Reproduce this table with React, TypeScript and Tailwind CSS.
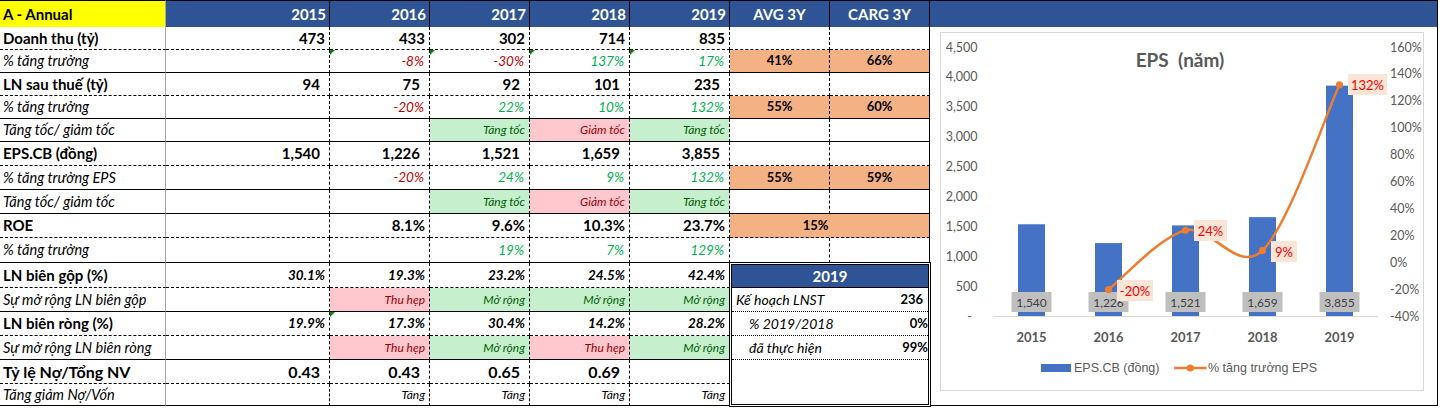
import React from 'react';

type Kind = 'num' | 'num9' | 'big' | 'neg' | 'pos' | 'up' | 'down' | 'bi' | 'orange' | 'orangeWide' | 'plain';

interface Cell {
  v?: string;
  k?: Kind;
  tri?: boolean;
  span?: number;
}

interface Row {
  label: string;
  lk: 'main' | 'sub' | 'big';
  solid: boolean;
  cells: Cell[];
}

// full class strings per cell kind
const kindClass: Record<Kind, string> = {
  num: 'justify-end pr-[4px] text-[15px] font-bold text-black',
  num9: 'justify-end pr-[9px] text-[15px] font-bold text-black',
  big: 'justify-end pr-[9px] text-[16px] font-bold text-black',
  neg: 'justify-end pr-[5px] text-[13.5px] italic text-[#C00000]',
  pos: 'justify-end pr-[5px] text-[13.5px] italic text-[#00B050]',
  up: 'justify-end pr-[4px] text-[12px] italic text-[#006100] bg-[#C6EFCE]',
  down: 'justify-end pr-[4px] text-[12px] italic text-[#9C0006] bg-[#FFC7CE]',
  bi: 'justify-end pr-[4px] text-[13.5px] font-bold italic text-black',
  orange: 'justify-center text-[13px] font-bold text-black bg-[#F4B183]',
  orangeWide: 'justify-center pr-[28px] text-[13px] font-bold text-black bg-[#F4B183]',
  plain: 'justify-end pr-[4px] text-[12px] italic text-black',
};

const labelClass = {
  main: 'pl-[3px] text-[15px] font-bold',
  sub: 'pl-[3px] text-[14.5px] italic',
  big: 'pl-[3px] text-[16px] font-bold',
};

const e: Cell = {};
const n = (v: string): Cell => ({ v, k: 'num' });
const n9 = (v: string): Cell => ({ v, k: 'num9' });
const big = (v: string): Cell => ({ v, k: 'big' });
const neg = (v: string, tri = false): Cell => ({ v, k: 'neg', tri });
const pos = (v: string, tri = false): Cell => ({ v, k: 'pos', tri });
const up = (v: string): Cell => ({ v, k: 'up' });
const down = (v: string): Cell => ({ v, k: 'down' });
const bi = (v: string, tri = false): Cell => ({ v, k: 'bi', tri });
const o = (v: string): Cell => ({ v, k: 'orange' });
const plain = (v: string): Cell => ({ v, k: 'plain' });

const rows: Row[] = [
  { label: 'Doanh thu (tỷ)', lk: 'main', solid: false, cells: [n('473'), n('433'), n('302'), n('714'), n('835'), e, e] },
  { label: '% tăng trưởng', lk: 'sub', solid: true, cells: [e, neg('-8%', true), neg('-30%', true), pos('137%', true), pos('17%', true), o('41%'), o('66%')] },
  { label: 'LN sau thuế (tỷ)', lk: 'main', solid: false, cells: [n9('94'), n9('75'), n9('92'), n9('101'), n9('235'), e, e] },
  { label: '% tăng trưởng', lk: 'sub', solid: true, cells: [e, neg('-20%'), pos('22%'), pos('10%'), pos('132%'), o('55%'), o('60%')] },
  { label: 'Tăng tốc/ giảm tốc', lk: 'sub', solid: true, cells: [e, e, up('Tăng tốc'), down('Giảm tốc'), up('Tăng tốc'), e, e] },
  { label: 'EPS.CB (đồng)', lk: 'main', solid: false, cells: [n9('1,540'), n9('1,226'), n9('1,521'), n9('1,659'), n9('3,855'), e, e] },
  { label: '% tăng trưởng EPS', lk: 'sub', solid: true, cells: [e, neg('-20%'), pos('24%'), pos('9%'), pos('132%'), o('55%'), o('59%')] },
  { label: 'Tăng tốc/ giảm tốc', lk: 'sub', solid: true, cells: [e, e, up('Tăng tốc'), down('Giảm tốc'), up('Tăng tốc'), e, e] },
  { label: 'ROE', lk: 'main', solid: false, cells: [e, n('8.1%'), n('9.6%'), n('10.3%'), n('23.7%'), { v: '15%', k: 'orangeWide', span: 2 }] },
  { label: '% tăng trưởng', lk: 'sub', solid: true, cells: [e, e, pos('19%'), pos('7%'), pos('129%'), e, e] },
  { label: 'LN biên gộp (%)', lk: 'main', solid: false, cells: [bi('30.1%'), bi('19.3%'), bi('23.2%'), bi('24.5%'), bi('42.4%')] },
  { label: 'Sự mở rộng LN biên gộp', lk: 'sub', solid: true, cells: [e, down('Thu hẹp'), up('Mở rộng'), up('Mở rộng'), up('Mở rộng')] },
  { label: 'LN biên ròng (%)', lk: 'main', solid: false, cells: [bi('19.9%'), bi('17.3%', true), bi('30.4%'), bi('14.2%'), bi('28.2%')] },
  { label: 'Sự mở rộng LN biên ròng', lk: 'sub', solid: true, cells: [e, down('Thu hẹp'), up('Mở rộng'), down('Thu hẹp'), up('Mở rộng')] },
  { label: 'Tỷ lệ Nợ/Tổng NV', lk: 'big', solid: false, cells: [big('0.43'), big('0.43'), big('0.65'), big('0.69'), e] },
  { label: 'Tăng giảm Nợ/Vốn', lk: 'sub', solid: true, cells: [e, plain('Tăng'), plain('Tăng'), plain('Tăng'), plain('Tăng')] },
];

const headers = ['2015', '2016', '2017', '2018', '2019'];

const DataCell = ({ cell, col, solid }: { cell: Cell; col: number; solid: boolean }) => {
  const lastCol = col + (cell.span ?? 1) - 1;
  const right = lastCol === 7 ? '' : '[border-right-style:dashed]';
  const bottom = solid ? '' : '[border-bottom-style:dashed]';
  return (
    <div
      className={`relative flex items-center whitespace-nowrap border-b border-r border-black ${bottom} ${right} ${
        cell.k ? kindClass[cell.k] : ''
      } ${cell.span === 2 ? 'col-span-2' : ''}`}
    >
      {cell.tri && (
        <span className="absolute left-0 top-0 h-0 w-0 border-t-[5px] border-r-[5px] border-t-[#008A00] border-r-transparent" />
      )}
      {cell.v}
    </div>
  );
};

const PlanBox = () => (
  <div className="z-10 col-start-7 col-span-2 row-start-12 row-span-6 -mb-px -ml-px -mr-px -mt-px flex flex-col border-[3px] border-double border-black bg-white">
    <div className="flex h-[23px] items-center justify-center border-b border-black bg-[#2F5496] text-[15px] font-bold text-white">
      2019
    </div>
    {[
      { l: 'Kế hoạch LNST', v: '236', pl: 'pl-[4px]', pr: 'pr-[5px]' },
      { l: '% 2019/2018', v: '0%', pl: 'pl-[17px]', pr: 'pr-0' },
      { l: 'đã thực hiện', v: '99%', pl: 'pl-[17px]', pr: 'pr-0' },
    ].map((r) => (
      <div key={r.l} className={`flex h-[24px] items-center justify-between border-b border-dotted border-black ${r.pl} ${r.pr}`}>
        <span className="text-[14px] italic">{r.l}</span>
        <span className="text-[13px] font-bold">{r.v}</span>
      </div>
    ))}
  </div>
);

// chart geometry (svg origin = inside of the grey frame)
const eps = [1540, 1226, 1521, 1659, 3855];
const years = ['2015', '2016', '2017', '2018', '2019'];
const base = 283.5;
const yl = (v: number) => base - (v * 269.5) / 4500;
const yr = (p: number) => base - (p + 40) * 1.3475;
const cx = (i: number) => 90.5 + 77 * i;

const growth = [
  { i: 1, p: -20 },
  { i: 2, p: 24 },
  { i: 3, p: 9 },
  { i: 4, p: 132 },
];

const smoothPath = () => {
  const pts = growth.map((g) => [cx(g.i), yr(g.p)]);
  let d = `M${pts[0][0]},${pts[0][1]}`;
  for (let k = 0; k < pts.length - 1; k++) {
    const p0 = pts[Math.max(k - 1, 0)];
    const p1 = pts[k];
    const p2 = pts[k + 1];
    const p3 = pts[Math.min(k + 2, pts.length - 1)];
    const c1 = [p1[0] + (p2[0] - p0[0]) / 6, p1[1] + (p2[1] - p0[1]) / 6];
    const c2 = [p2[0] - (p3[0] - p1[0]) / 6, p2[1] - (p3[1] - p1[1]) / 6];
    d += ` C${c1[0]},${c1[1]} ${c2[0]},${c2[1]} ${p2[0]},${p2[1]}`;
  }
  return d;
};

const pctLabels = [
  { t: '-20%', x: 176, y: 247, w: 36 },
  { t: '24%', x: 253, y: 187, w: 33 },
  { t: '9%', x: 330, y: 208, w: 26 },
  { t: '132%', x: 407, y: 41, w: 39 },
];

const EpsChart = () => {
  const leftTicks = [4500, 4000, 3500, 3000, 2500, 2000, 1500, 1000, 500];
  const rightTicks = [160, 140, 120, 100, 80, 60, 40, 20, 0, -20, -40];
  return (
    <svg width={482} height={357} className="block">
      <text x={239} y={26} textAnchor="middle" dominantBaseline="central" fontFamily="Lato" fontWeight={700} fontSize={19} fill="#595959">
        {'EPS\u00a0 (năm)'}
      </text>
      {leftTicks.map((v) => (
        <text key={v} x={36.5} y={yl(v)} textAnchor="end" dominantBaseline="central" fontFamily="Lato" fontSize={12.5} fill="#595959">
          {v.toLocaleString('en-US')}
        </text>
      ))}
      <text x={31} y={base} textAnchor="end" dominantBaseline="central" fontFamily="Lato" fontSize={12.5} fill="#595959">
        -
      </text>
      {rightTicks.map((p) => (
        <text key={p} x={449} y={yr(p)} dominantBaseline="central" fontFamily="Lato" fontSize={12.5} fill="#595959">
          {p}%
        </text>
      ))}
      {eps.map((v, i) => (
        <rect key={i} x={cx(i) - 13.5} y={yl(v)} width={27} height={base - yl(v)} fill="#4472C4" />
      ))}
      <line x1={52} x2={437} y1={base} y2={base} stroke="#D9D9D9" strokeWidth={1} />
      {eps.map((v, i) => (
        <g key={i}>
          <rect x={cx(i) - 20} y={259} width={40} height={20} fill="#BFBFBF" />
          <text x={cx(i)} y={269} textAnchor="middle" dominantBaseline="central" fontFamily="Lato" fontSize={12} fill="#404040">
            {v.toLocaleString('en-US')}
          </text>
        </g>
      ))}
      <path d={smoothPath()} fill="none" stroke="#ED7D31" strokeWidth={2.5} strokeLinecap="round" />
      {growth.map((g) => (
        <circle key={g.i} cx={cx(g.i)} cy={yr(g.p)} r={3.6} fill="#ED7D31" />
      ))}
      {pctLabels.map((l) => (
        <g key={l.t}>
          <rect x={l.x} y={l.y} width={l.w} height={21} fill="#FBE5D6" />
          <text x={l.x + l.w / 2} y={l.y + 10.5} textAnchor="middle" dominantBaseline="central" fontFamily="Lato" fontSize={13} fill="#FF0000">
            {l.t}
          </text>
        </g>
      ))}
      {years.map((y, i) => (
        <text key={y} x={cx(i)} y={304} textAnchor="middle" dominantBaseline="central" fontFamily="Lato" fontWeight={700} fontSize={13} fill="#595959">
          {y}
        </text>
      ))}
      <rect x={100} y={331} width={30} height={8} fill="#4472C4" />
      <text x={133} y={335} dominantBaseline="central" fontFamily="Liberation Sans" fontSize={12.5} fill="#595959">
        EPS.CB (đồng)
      </text>
      <line x1={233} x2={265.5} y1={335} y2={335} stroke="#ED7D31" strokeWidth={2.5} />
      <circle cx={249.3} cy={335} r={3.6} fill="#ED7D31" />
      <text x={267} y={335} dominantBaseline="central" fontFamily="Liberation Sans" fontSize={12.5} fill="#595959">
        % tăng trưởng EPS
      </text>
    </svg>
  );
};

export default function App() {
  return (
    <div className="h-[410px] w-[1440px] overflow-hidden bg-white font-['Lato',sans-serif] text-black">
      <div className="grid grid-cols-[166px_164px_100px_100px_100px_100px_100px_100px_508px] grid-rows-[27px_23px_23px_23px_23px_23px_24px_24px_24px_24px_25px_25px_24px_24px_24px_24px_22px]">
        {/* header row */}
        <div className="flex items-center border-r border-t border-black border-r-[#A6A6A6] bg-[#FFFF00] pl-[3px] text-[15px] font-bold">
          A - Annual
        </div>
        {headers.map((h) => (
          <div key={h} className="flex items-center justify-end border-r border-t border-black bg-[#2F5496] pr-[3px] text-[15px] font-bold text-white">
            {h}
          </div>
        ))}
        <div className="flex items-center justify-center border-r border-t border-black bg-[#2F5496] text-[15px] font-bold text-white">
          AVG 3Y
        </div>
        <div className="flex items-center justify-center border-r border-t border-black bg-[#2F5496] text-[15px] font-bold text-white">
          CARG 3Y
        </div>
        <div className="border-r border-t border-black bg-[#2F5496]" />

        {/* chart panel and plan box */}
        <div className="col-start-9 row-start-2 row-span-16 border-b border-r border-black pl-[10px] pt-[5px]">
          <div className="h-[359px] w-[484px] border border-[#D9D9D9]">
            <EpsChart />
          </div>
        </div>
        <PlanBox />

        {rows.map((r, ri) => (
          <React.Fragment key={ri}>
            <div
              className={`flex items-center whitespace-nowrap border-b border-r border-black border-r-[#A6A6A6] ${
                r.solid ? '' : '[border-bottom-style:dashed]'
              } ${labelClass[r.lk]}`}
            >
              {r.label}
            </div>
            {r.cells.map((c, ci) => (
              <DataCell key={ci} cell={c} col={ci + 1} solid={r.solid} />
            ))}
          </React.Fragment>
        ))}
      </div>
    </div>
  );
}
